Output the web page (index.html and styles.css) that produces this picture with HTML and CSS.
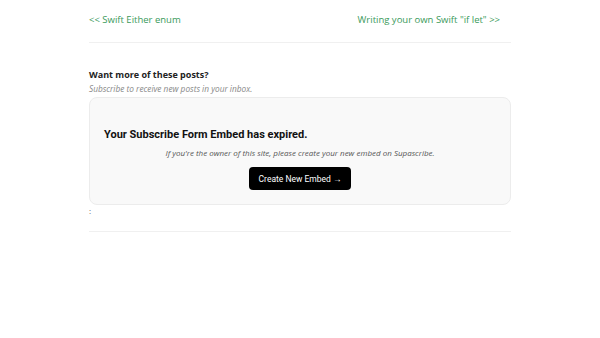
FILE: index.html
```html
<!DOCTYPE html>
<html lang="en">
<head>
    <meta charset="UTF-8">
    <meta name="viewport" content="width=device-width, initial-scale=1.0">
    <title>Swift Either enum</title>
    <link rel="stylesheet" href="styles.css">
</head>
<body>
    <div class="page">
        <nav class="post-nav">
            <a href="#">&lt;&lt; Swift Either enum</a>
            <a href="#">Writing your own Swift "if let" &gt;&gt;</a>
        </nav>

        <section class="subscribe">
            <h3>Want more of these posts?</h3>
            <p class="subscribe-note">Subscribe to receive new posts in your inbox.</p>

            <div class="embed">
                <h2>Your Subscribe Form Embed has expired.</h2>
                <p>If you're the owner of this site, please create your new embed on Supascribe.</p>
                <button>Create New Embed &rarr;</button>
            </div>
            <div class="colon">:</div>
        </section>
    </div>
</body>
</html>
```

FILE: styles.css
```css
body {
    font-family: "Open Sans", Arial, sans-serif;
    margin: 0;
    background: #fff;
    color: #333;
}

.page {
    width: 422px;
    margin: 0 auto;
}

.post-nav {
    display: flex;
    justify-content: space-between;
    padding: 12px 11px 14px 0;
    border-bottom: 1px solid #f0f0f0;
}

.post-nav a {
    color: #3a9a5b;
    text-decoration: none;
    font-size: 9.5px;
    line-height: 16px;
}

.subscribe {
    padding-top: 25px;
    padding-bottom: 14px;
    border-bottom: 1px solid #f0f0f0;
}

.subscribe h3 {
    margin: 0;
    font-size: 9px;
    font-weight: bold;
    line-height: 14px;
    color: #222;
}

.subscribe-note {
    margin: 0 0 1px;
    font-size: 8.3px;
    font-style: italic;
    line-height: 14px;
    color: #888;
}

.embed {
    background: #f9f9f9;
    border: 1px solid #ececec;
    border-radius: 8px;
    padding: 29px 14px 14px;
    text-align: center;
}

.embed h2 {
    margin: 0 0 5px;
    text-align: left;
    font-family: Roboto, sans-serif;
    font-size: 11px;
    font-weight: bold;
    line-height: 15px;
    color: #111;
}

.embed p {
    margin: 0 0 8px;
    font-size: 8px;
    font-style: italic;
    line-height: 12px;
    color: #555;
}

.embed button {
    display: inline-block;
    background: #000;
    color: #fff;
    border: none;
    border-radius: 4px;
    font-family: Roboto, sans-serif;
    font-size: 8.5px;
    padding: 0 10px;
    height: 23px;
    vertical-align: top;
    cursor: pointer;
}

.colon {
    font-size: 8px;
    line-height: 12px;
    color: #666;
}
```
